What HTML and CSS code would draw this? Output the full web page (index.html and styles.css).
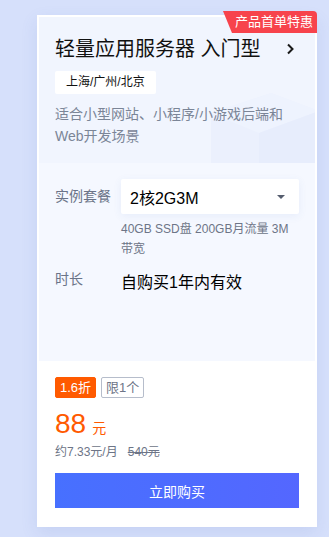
FILE: index.html
```html
<!DOCTYPE html>
<html lang="zh-CN">
<head>
<meta charset="utf-8">
<title>轻量应用服务器</title>
<link rel="stylesheet" href="styles.css">
</head>
<body>
<div class="card">
  <div class="badge">产品首单特惠</div>
  <section class="top">
    <svg class="deco" width="120" height="80" viewBox="0 0 120 80">
      <polygon points="10,30 70,10 118,28 118,80 10,80" fill="#ebf0fd"/>
      <polygon points="10,30 70,10 118,28 58,50" fill="#eef3fe"/>
      <polygon points="58,50 118,28 118,80 58,80" fill="#e7edfc"/>
    </svg>
    <div class="title-row">
      <h1 class="title">轻量应用服务器 入门型</h1>
      <svg class="chev" width="9" height="12" viewBox="0 0 9 12"><path d="M2 1.5 L6.5 6 L2 10.5" fill="none" stroke="#1a1a1a" stroke-width="2"/></svg>
    </div>
    <span class="region">上海/广州/北京</span>
    <p class="desc">适合小型网站、小程序/小游戏后端和Web开发场景</p>
  </section>
  <section class="config">
    <div class="row">
      <span class="label label-mid">实例套餐</span>
      <div class="col">
        <div class="select">
          <span>2核2G3M</span>
          <svg width="10" height="6" viewBox="0 0 10 6"><path d="M1 1 L9 1 L5 5 Z" fill="#555d6e"/></svg>
        </div>
        <p class="spec">40GB SSD盘 200GB月流量 3M 带宽</p>
      </div>
    </div>
    <div class="row row-time">
      <span class="label">时长</span>
      <span class="value">自购买1年内有效</span>
    </div>
  </section>
  <section class="buy">
    <div class="tags">
      <span class="tag tag-off">1.6折</span>
      <span class="tag tag-limit">限1个</span>
    </div>
    <div class="price"><span class="num">88</span><span class="unit">元</span></div>
    <div class="sub"><span>约7.33元/月</span><s class="orig">540元</s></div>
    <button class="btn">立即购买</button>
  </section>
</div>
</body>
</html>
```
FILE: styles.css
```css
* { box-sizing: border-box; }
html, body { margin: 0; padding: 0; }
body {
  background: #d6e0fb;
  font-family: "Liberation Sans", "Noto Sans CJK SC", sans-serif;
  width: 329px;
  height: 537px;
  overflow: hidden;
  padding-top: 15px;
  padding-left: 37px;
}
.card {
  position: relative;
  width: 280px;
  height: 512px;
  border: 2px solid #fff;
  background: #fff;
  display: flex;
  flex-direction: column;
  box-shadow: 0 6px 16px rgba(80, 110, 190, 0.12);
}
.badge {
  position: absolute;
  top: -6px;
  right: -2px;
  height: 22px;
  padding: 0 4px 0 12px;
  background: #f7434c;
  color: #fff;
  font-size: 13px;
  line-height: 22px;
  border-radius: 0 4px 0 0;
  clip-path: polygon(0 0, 100% 0, 100% 100%, 9px 100%);
  z-index: 2;
}
.top {
  position: relative;
  height: 146px;
  background: #f1f5fe;
  padding: 18px 16px 0 16px;
  overflow: hidden;
}
.deco {
  position: absolute;
  right: -6px;
  bottom: 0;
}
.title-row {
  position: relative;
  display: flex;
  align-items: center;
  justify-content: space-between;
  height: 28px;
}
.title {
  margin: 0;
  font-size: 20px;
  font-weight: normal;
  color: #111;
  line-height: 28px;
}
.chev { margin-right: 4px; }
.region {
  position: relative;
  display: inline-block;
  margin-top: 8px;
  height: 23px;
  line-height: 23px;
  padding: 0 11px;
  background: #fff;
  border-radius: 2px;
  font-size: 12px;
  color: #111;
}
.desc {
  position: relative;
  margin: 9px 0 0;
  font-size: 14px;
  line-height: 22px;
  color: #7b8597;
  width: 232px;
}
.config {
  height: 198px;
  background: #f5f8ff;
  padding: 16px 16px 0 16px;
}
.row { display: flex; align-items: flex-start; }
.label {
  width: 66px;
  flex: none;
  font-size: 14px;
  color: #6b7488;
  line-height: 20px;
}
.label-mid { line-height: 35px; }
.col { flex: 1; }
.select {
  height: 35px;
  background: #fff;
  border-radius: 2px;
  box-shadow: 0 2px 8px rgba(70, 100, 190, 0.08);
  display: flex;
  align-items: center;
  justify-content: space-between;
  padding: 0 13px 0 9px;
  font-size: 16px;
  color: #000;
}
.spec {
  margin: 5px 0 0;
  font-size: 12px;
  line-height: 20px;
  color: #6d7587;
}
.row-time { margin-top: 10px; }
.value {
  font-size: 16px;
  line-height: 28px;
  color: #000;
}
.buy {
  flex: 1;
  background: #fff;
  padding: 16px 16px 0 16px;
}
.tags { display: flex; gap: 5px; }
.tag {
  height: 21px;
  line-height: 19px;
  font-size: 13px;
  padding: 0 4px;
  border: 1px solid transparent;
  border-radius: 2px;
}
.tag-off { background: #ff5a00; border-color: #ff5a00; color: #fff; }
.tag-limit { border-color: #b6bdcb; color: #6d7587; }
.price {
  margin-top: 8px;
  height: 36px;
  display: flex;
  align-items: baseline;
  color: #ff5a00;
}
.num { font-size: 28px; line-height: 36px; }
.unit { font-size: 14px; margin-left: 6px; }
.sub {
  display: flex;
  gap: 10px;
  font-size: 12px;
  line-height: 20px;
  color: #6d7587;
}
.orig { color: #6d7587; }
.btn {
  margin-top: 11px;
  width: 244px;
  height: 35px;
  border: 0;
  border-radius: 0;
  background: linear-gradient(90deg, #4770ff, #5467ff);
  color: #fff;
  font-family: inherit;
  font-size: 14px;
  cursor: pointer;
}
```
